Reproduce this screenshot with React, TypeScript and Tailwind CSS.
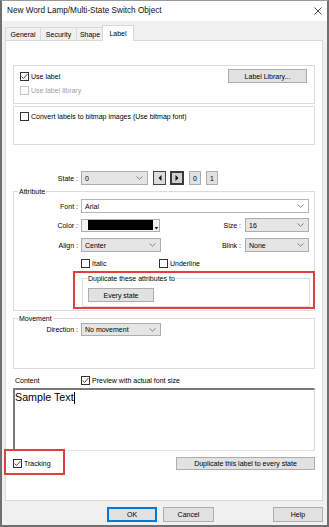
import React from "react";

function Chevron() {
  return (
    <svg width="7" height="4" viewBox="0 0 7 4" className="shrink-0">
      <path d="M0.5 0.5 L3.5 3.2 L6.5 0.5" fill="none" stroke="#6d6d6d" strokeWidth="0.8" />
    </svg>
  );
}

function CheckBox({ checked = false, disabled = false }: { checked?: boolean; disabled?: boolean }) {
  return (
    <div
      className={
        disabled
          ? "w-[9px] h-[9px] border border-[#c4c4c4] bg-white shrink-0"
          : "w-[9px] h-[9px] border border-[#333333] bg-white shrink-0 flex items-center justify-center"
      }
    >
      {checked && (
        <svg width="7" height="7" viewBox="0 0 7 7">
          <path d="M0.7 3.6 L2.6 5.5 L6.3 1.1" fill="none" stroke="#333333" strokeWidth="0.9" />
        </svg>
      )}
    </div>
  );
}

function Select({ value, className }: { value: string; className: string }) {
  return (
    <div className={"h-[14px] bg-[#e5e5e5] border border-[#adadad] flex items-center justify-between pl-[3px] pr-[4px] " + className}>
      <span className="leading-none">{value}</span>
      <Chevron />
    </div>
  );
}

function Btn({ label, className }: { label: string; className: string }) {
  return (
    <div className={"bg-[#e1e1e1] border border-[#adadad] flex items-center justify-center leading-none " + className}>
      {label}
    </div>
  );
}

export default function App() {
  return (
    <div className="w-[329px] h-[527px] bg-[#f0f0f0] border-l-2 border-r-2 border-b-2 border-[#6f6f6f] border-t border-t-[#9a9a9a] flex flex-col font-['Liberation_Sans',Arial,sans-serif] text-[7px] text-black relative overflow-hidden">
      {/* Title bar */}
      <div className="h-[20px] bg-white flex items-center justify-between pl-[5px] pr-[5px] shrink-0">
        <span className="text-[8.2px] leading-none text-[#111]">New Word Lamp/Multi-State Switch Object</span>
        <svg width="8" height="8" viewBox="0 0 8 8">
          <path d="M0.5 0.5 L7.5 7.5 M7.5 0.5 L0.5 7.5" stroke="#222" strokeWidth="0.8" />
        </svg>
      </div>

      {/* Tabs */}
      <div className="mt-[4px] h-[15px] pl-[3px] flex items-end shrink-0">
        <div className="w-[36px] h-[13px] border border-b-0 border-[#d9d9d9] flex items-center justify-center leading-none">General</div>
        <div className="-ml-px w-[37px] h-[13px] border border-b-0 border-[#d9d9d9] flex items-center justify-center leading-none">Security</div>
        <div className="-ml-px w-[28px] h-[13px] border border-b-0 border-[#d9d9d9] flex items-center justify-center leading-none">Shape</div>
        <div className="-ml-[2px] -mb-px w-[32px] h-[16px] border border-b-0 border-[#d9d9d9] bg-white relative z-10 flex items-center justify-center leading-none pb-[1px]">Label</div>
      </div>

      {/* Panel */}
      <div className="ml-[3px] mr-[4px] h-[461px] bg-white border border-[#d9d9d9] px-[7px] flex flex-col shrink-0">
        {/* Group 1 */}
        <div className="mt-[24px] h-[39px] border border-[#dcdcdc] flex flex-col pl-[6px] pr-[7px]">
          <div className="mt-[3px] h-[14px] flex items-center justify-between">
            <div className="flex items-center gap-[2px]">
              <CheckBox checked />
              <span className="leading-none">Use label</span>
            </div>
            <Btn label="Label Library..." className="w-[79px] h-[14px]" />
          </div>
          <div className="mt-[3px] h-[9px] flex items-center gap-[2px]">
            <CheckBox disabled />
            <span className="leading-none text-[#a0a0a0]">Use label library</span>
          </div>
        </div>

        {/* Group 2 */}
        <div className="mt-[2px] h-[39px] border border-[#dcdcdc] flex flex-col pl-[6px]">
          <div className="mt-[5px] h-[9px] flex items-center gap-[2px]">
            <CheckBox />
            <span className="leading-none">Convert labels to bitmap images (Use bitmap font)</span>
          </div>
        </div>

        {/* State row */}
        <div className="mt-[26px] h-[14px] flex items-center">
          <span className="w-[65px] text-right leading-none">State :</span>
          <Select value="0" className="ml-[3px] w-[67px]" />
          <div className="ml-[5px] w-[13px] h-[14px] border border-[#444] bg-[#dcdcdc] flex items-center justify-center">
            <svg width="4" height="6" viewBox="0 0 4 6"><path d="M3.5 0 L0.5 3 L3.5 6 Z" fill="#111" /></svg>
          </div>
          <div className="ml-[4px] w-[14px] h-[14px] border-2 border-[#3a3a3a] bg-[#d0d0d0] flex items-center justify-center">
            <svg width="4" height="6" viewBox="0 0 4 6"><path d="M0.5 0 L3.5 3 L0.5 6 Z" fill="#111" /></svg>
          </div>
          <Btn label="0" className="ml-[5px] w-[12px] h-[14px]" />
          <Btn label="1" className="ml-[5px] w-[12px] h-[14px]" />
        </div>

        {/* Attribute */}
        <div className="mt-[6px] h-[120px] border border-[#dcdcdc] flex flex-col pr-[5px] shrink-0">
          <span className="self-start ml-[4px] px-[1px] -mt-[4px] h-[7px] leading-[7px] bg-white">Attribute</span>
          <div className="mt-[4px] h-[14px] flex items-center">
            <span className="w-[64px] text-right leading-none">Font :</span>
            <div className="ml-[3px] flex-1 h-[14px] bg-white border border-[#b5b5b5] flex items-center justify-between pl-[3px] pr-[4px]">
              <span className="leading-none">Arial</span>
              <Chevron />
            </div>
          </div>
          <div className="mt-[5px] h-[14px] flex items-center justify-between">
            <div className="flex items-center">
              <span className="w-[64px] text-right leading-none">Color :</span>
              <div className="ml-[3px] w-[79px] h-[13px] border border-[#adadad] bg-[#f4f4f4] flex items-end pl-[6px] pb-[1px]">
                <div className="w-[66px] h-[10px] bg-black" />
                <svg width="5" height="3" viewBox="0 0 5 3" className="ml-[1px] mb-[0px]"><path d="M0.5 0 L4.5 0 L2.5 2.5 Z" fill="#222" /></svg>
              </div>
            </div>
            <div className="flex items-center">
              <span className="leading-none">Size :</span>
              <Select value="16" className="ml-[4px] w-[64px]" />
            </div>
          </div>
          <div className="mt-[6px] h-[14px] flex items-center justify-between">
            <div className="flex items-center">
              <span className="w-[64px] text-right leading-none">Align :</span>
              <Select value="Center" className="ml-[3px] w-[80px]" />
            </div>
            <div className="flex items-center">
              <span className="leading-none">Blink :</span>
              <Select value="None" className="ml-[4px] w-[64px]" />
            </div>
          </div>
          <div className="mt-[7px] h-[9px] flex items-center pl-[67px]">
            <div className="w-[78px] flex items-center gap-[2px]">
              <CheckBox />
              <span className="leading-none">Italic</span>
            </div>
            <div className="flex items-center gap-[2px]">
              <CheckBox />
              <span className="leading-none">Underline</span>
            </div>
          </div>
          <div className="mt-[10px] ml-[68px] w-[228px] h-[29px] border border-[#dcdcdc] flex flex-col">
            <span className="self-start ml-[4px] px-[1px] -mt-[4px] h-[7px] leading-[7px] bg-white">Duplicate these attributes to</span>
            <Btn label="Every state" className="mt-[6px] ml-[5px] w-[66px] h-[14px]" />
          </div>
        </div>

        {/* Movement */}
        <div className="mt-[7px] h-[51px] border border-[#dcdcdc] flex flex-col shrink-0">
          <span className="self-start ml-[4px] px-[1px] -mt-[4px] h-[7px] leading-[7px] bg-white">Movement</span>
          <div className="mt-[1px] h-[13px] flex items-center">
            <span className="w-[64px] text-right leading-none">Direction :</span>
            <Select value="No movement" className="ml-[3px] w-[80px] !h-[13px]" />
          </div>
        </div>

        {/* Content */}
        <div className="mt-[7px] h-[9px] flex items-center">
          <span className="w-[68px] pl-[2px] leading-none">Content</span>
          <CheckBox checked />
          <span className="ml-[2px] leading-none">Preview with actual font size</span>
        </div>
        <div className="mt-[3px] h-[63px] border-t-2 border-l-2 border-[#7a7a7a] border-r border-b border-r-[#d8d8d8] border-b-[#e3e3e3] bg-white flex items-start pt-[1px] shrink-0">
          <span className="text-[10.7px] leading-[13px] text-black">Sample Text</span>
          <div className="w-px h-[12px] mt-[1px] bg-black" />
        </div>

        {/* Tracking row */}
        <div className="mt-[6px] h-[13px] flex items-center justify-between">
          <div className="flex items-center gap-[2px]">
            <CheckBox checked />
            <span className="leading-none">Tracking</span>
          </div>
          <Btn label="Duplicate this label to every state" className="w-[139px] h-[13px]" />
        </div>
      </div>

      {/* Bottom buttons */}
      <div className="mt-[6px] h-[15px] flex pl-[105px] pr-[4px] shrink-0">
        <div className="w-[50px] h-[15px] bg-[#e1e1e1] border-2 border-[#0078d7] flex items-center justify-center leading-none">OK</div>
        <Btn label="Cancel" className="ml-[6px] w-[51px] h-[15px]" />
        <Btn label="Help" className="ml-auto w-[50px] h-[15px]" />
      </div>

      {/* Red annotation boxes */}
      <div className="absolute left-[71px] top-[270px] w-[242px] h-[38px] border-2 border-[#e53e3e]" />
      <div className="absolute left-[2px] top-[448px] w-[61px] h-[26px] border-2 border-[#e53e3e]" />
    </div>
  );
}
